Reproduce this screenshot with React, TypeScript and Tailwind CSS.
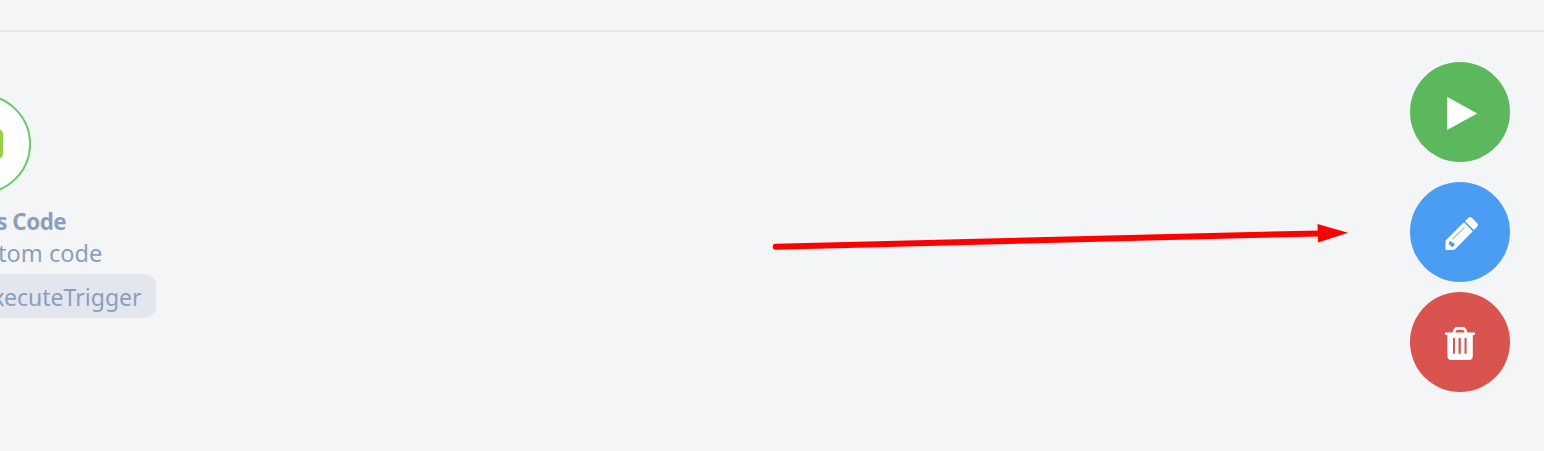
import type { ReactNode } from 'react';

function ActionButton({ label, className, children }: { label: string; className: string; children: ReactNode }) {
  return (
    <button aria-label={label} className={`size-[100px] rounded-full flex items-center justify-center text-white ${className}`}>
      <svg viewBox="0 0 60 60" className="size-[60px]" fill="currentColor">
        {children}
      </svg>
    </button>
  );
}

function TriggerNode() {
  return (
    <section className="w-[156px] pt-[62px] flex flex-col items-end overflow-hidden text-[24px] text-[#8a9fbe] whitespace-nowrap">
      <div className="mr-[125px] size-[100px] shrink-0 rounded-full border-2 border-[#68ca68] bg-white flex items-center justify-center">
        <div className="w-[44px] h-[30px] rounded-[5px] bg-[#98d045]" />
      </div>
      <h2 className="mt-[11px] mr-[90px] h-8 leading-8 font-bold tracking-[-0.5px] origin-right scale-x-[0.93]">s Code</h2>
      <p className="mr-[54px] h-8 leading-8 origin-right scale-x-[0.98]">tom code</p>
      <div className="mt-[5px] h-11 leading-[46px] rounded-[10px] bg-[#e3e6ed] pr-[14px] pl-4">
        <span className="inline-block origin-right scale-x-[0.96]">executeTrigger</span>
      </div>
    </section>
  );
}

export default function App() {
  return (
    <div className="relative w-[1544px] h-[451px] overflow-hidden bg-[#f4f5f7] font-['Noto_Sans',sans-serif]">
      <header className="h-8 border-b-2 border-[#e3e5e8]" />
      <main className="flex justify-between">
        <TriggerNode />
        <aside className="pt-[30px] pr-[34px] flex flex-col">
          <ActionButton label="Run" className="bg-[#5cb85c]">
            <path d="M17 14.8 47.3 31.4 17 48Z" />
          </ActionButton>
          <ActionButton label="Edit" className="mt-5 bg-[#4a9df3]">
            <path d="M35 19.2 38.3 15.9Q40 14.3 42 16L47 21Q48.8 22.9 47.2 24.7L43.9 28.1Z" />
            <path fillRule="evenodd" d="M33.9 20.3 42.8 29.2 25 47.2Q24.2 48 23 48H15.5V40Q15.5 38.7 16.4 37.8ZM34.4 24.9 22 37 22.5 37.5 34.9 25.4ZM18.8 39.8 19.3 42 18.2 42.8 20.5 43 20.8 44.6 22.5 45 24.6 43.2 24 41.1 22 40.5 21.5 39.2Z" />
          </ActionButton>
          <ActionButton label="Delete" className="mt-2.5 bg-[#d9534f]">
            <path fillRule="evenodd" d="M22.5 20.6 24 16.8Q24.8 15 27 15H33Q35.2 15 36 16.8L37.5 20.6H45V23H42.8V44Q42.8 48 38.8 48H21.4Q17.4 48 17.4 44V23H15V20.6ZM25.2 20.6H34.8L33.8 18.4Q33.5 17.8 32.5 17.8H27.5Q26.5 17.8 26.2 18.4ZM23 26V41.8H25V26ZM28.5 26V41.8H30.8V26ZM34.5 26V41.8H36.6V26Z" />
          </ActionButton>
        </aside>
      </main>
      <svg className="absolute left-[770px] top-[220px] w-[580px] h-[34px]" viewBox="770 220 580 34">
        <path d="M775.7 246.7 1320 233.4" stroke="#f00" strokeWidth="6" strokeLinecap="round" />
        <path d="M1317.5 224 1348 232.7 1318 242.5Z" fill="#f00" />
      </svg>
    </div>
  );
}
